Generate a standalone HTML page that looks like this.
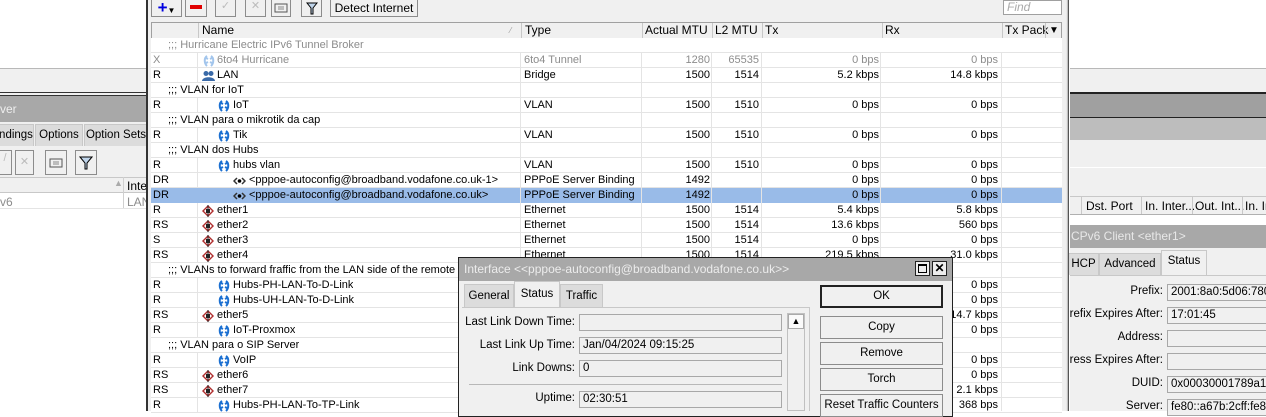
<!DOCTYPE html>
<html><head><meta charset="utf-8"><style>
*{box-sizing:border-box;margin:0;padding:0}
body{width:1266px;height:411px;overflow:hidden;position:relative;background:#fff;font:11px "Liberation Sans",sans-serif;color:#000}
.a{position:absolute;white-space:nowrap}
.btn{position:absolute;border:1px solid #8c8c8c;background:#f0f0f0;text-align:center;line-height:15px;white-space:nowrap}
.r{position:absolute;left:151px;width:911px;height:15px;border-bottom:1px solid #e4e4e4;background:#fff}
.r span{position:absolute;top:0;line-height:15px;white-space:nowrap;overflow:hidden}
.f{left:2px}
.ty{left:373px;width:118px}
.m{left:492px;width:67px;text-align:right}
.l{left:561px;width:47px;text-align:right}
.tx{left:612px;width:116px;text-align:right}
.rx{left:731px;width:116px;text-align:right}
.vl{position:absolute;top:0;height:15px;width:1px;background:#e4e4e4}
.g{color:#8c8c8c}
.sel{background:#99bbe8}
.tab{position:absolute;border:1px solid #c8c8c8;border-bottom:none;background:#dcdcdc;text-align:center;line-height:20px;font-size:11.5px;white-space:nowrap;overflow:hidden}
.lbl{position:absolute;text-align:right;font-size:11.5px;white-space:nowrap;overflow:hidden}
.inp{position:absolute;border:1px solid #a8a8a8;background:#f0f0f0;height:17px;line-height:15px;padding-left:3px;font-size:11.5px;white-space:nowrap;overflow:hidden}
.db{position:absolute;left:820px;width:123px;height:23px;border:1px solid #8c8c8c;background:#f0f0f0;text-align:center;line-height:21px;font-size:11.5px;white-space:nowrap}
</style></head><body>

<!-- left panel -->
<div class="a" style="left:0;top:68px;width:147px;height:25px;background:#f0f0f0;border-top:1px solid #b8b8b8"></div>
<div class="a" style="left:0;top:92px;width:147px;height:4px;border-top:1px solid #333;border-bottom:1px solid #333;background:#f0f0f0"></div>
<div class="a" style="left:0;top:96px;width:147px;height:26px;background:#a8a8a8;color:#eee;font-size:12px;line-height:26px">ver</div>
<div class="a" style="left:0;top:122px;width:147px;height:56px;background:#f0f0f0"></div>
<div class="tab" style="left:-2px;top:124px;width:36px;height:22px">ndings</div>
<div class="tab" style="left:35px;top:124px;width:48px;height:22px">Options</div>
<div class="tab" style="left:84px;top:124px;width:64px;height:22px">Option Sets</div>
<div class="btn" style="left:-2px;top:150px;width:14px;height:25px;color:#bbb">/</div>
<div class="btn" style="left:15px;top:150px;width:19px;height:25px;color:#bbb;line-height:22px">✕</div>
<div class="btn" style="left:45px;top:150px;width:22px;height:25px"><svg width="14" height="12" style="margin-top:6px"><rect x="1" y="2" width="12" height="8" fill="none" stroke="#555"/><path d="M4 5h6M4 7h6" stroke="#888"/></svg></div>
<div class="btn" style="left:75px;top:150px;width:22px;height:25px"><svg width="14" height="14" style="margin-top:5px"><path d="M1 1h12L8 7v6H6V7z" fill="#bfd4ea" stroke="#000"/></svg></div>
<div class="a" style="left:0;top:177px;width:147px;height:16px;background:#f0f0f0;border-top:1px solid #c8c8c8;border-bottom:1px solid #c8c8c8"></div>
<div class="a" style="left:123px;top:177px;width:1px;height:31px;background:#d0d0d0"></div>
<div class="a" style="left:114px;top:178px;color:#aaa;font-size:9px">▲</div>
<div class="a" style="left:127px;top:179px;font-size:12px">Inter</div>
<div class="a" style="left:0;top:195px;color:#8c8c8c;font-size:12px">v6</div>
<div class="a" style="left:127px;top:195px;color:#8c8c8c;font-size:12px">LAN</div>
<div class="a" style="left:0;top:208px;width:147px;height:1px;background:#e4e4e4"></div>

<!-- right panel -->
<div class="a" style="left:1070px;top:68px;width:196px;height:24px;background:#f0f0f0;border-top:1px solid #b8b8b8"></div>
<div class="a" style="left:1070px;top:92px;width:196px;height:2px;background:#222"></div>
<div class="a" style="left:1070px;top:94px;width:196px;height:23px;background:#a0a0a0"></div>
<div class="a" style="left:1070px;top:117px;width:196px;height:1px;background:#222"></div>
<div class="a" style="left:1070px;top:118px;width:196px;height:22px;background:#bdbdbd"></div>
<div class="a" style="left:1070px;top:140px;width:196px;height:57px;background:#f0f0f0;border-bottom:1px solid #c8c8c8"></div>
<div class="a" style="left:1070px;top:167px;width:196px;height:1px;background:#fff"></div>
<div class="a" style="left:1070px;top:197px;width:196px;height:18px;background:#f0f0f0;border-bottom:1px solid #b0b0b0;font-size:12px;line-height:18px;overflow:hidden">
<span class="a" style="left:11px;top:0;width:1px;height:18px;background:#c8c8c8"></span>
<span class="a" style="left:16px">Dst. Port</span>
<span class="a" style="left:71px;top:0;width:1px;height:18px;background:#c8c8c8"></span>
<span class="a" style="left:75px">In. Inter...</span>
<span class="a" style="left:122px;top:0;width:1px;height:18px;background:#c8c8c8"></span>
<span class="a" style="left:125px">Out. Int...</span>
<span class="a" style="left:172px;top:0;width:1px;height:18px;background:#c8c8c8"></span>
<span class="a" style="left:175px">In. In</span></div>
<div class="a" style="left:1070px;top:225px;width:196px;height:23px;background:#a8a8a8;color:#e8e8e8;font-size:12px;line-height:23px;padding-left:1px">CPv6 Client &lt;ether1&gt;</div>
<div class="a" style="left:1070px;top:248px;width:196px;height:163px;background:#f0f0f0"></div>
<div class="tab" style="left:1068px;top:253px;width:31px;height:22px">HCP</div>
<div class="tab" style="left:1099px;top:253px;width:62px;height:22px">Advanced</div>
<div class="tab" style="left:1161px;top:250px;width:46px;height:26px;background:#f0f0f0">Status</div>
<div class="a" style="left:1070px;top:275px;width:196px;height:1px;background:#c8c8c8"></div>
<div class="lbl" style="left:1060px;width:103px;top:285px">Prefix:</div>
<div class="inp" style="left:1167px;top:284px;width:110px">2001:8a0:5d06:7800</div>
<div class="lbl" style="left:1060px;width:103px;top:308px">Prefix Expires After:</div>
<div class="inp" style="left:1167px;top:307px;width:110px">17:01:45</div>
<div class="lbl" style="left:1060px;width:103px;top:331px">Address:</div>
<div class="inp" style="left:1167px;top:330px;width:110px"></div>
<div class="lbl" style="left:1070px;width:93px;top:354px"><span style="position:absolute;right:0">Address Expires After:</span>&nbsp;</div>
<div class="inp" style="left:1167px;top:353px;width:110px"></div>
<div class="lbl" style="left:1060px;width:103px;top:377px">DUID:</div>
<div class="inp" style="left:1167px;top:376px;width:110px">0x00030001789a18</div>
<div class="lbl" style="left:1060px;width:103px;top:400px">Server:</div>
<div class="inp" style="left:1167px;top:399px;width:110px">fe80::a67b:2cff:fe8d</div>

<!-- main window -->
<div class="a" style="left:146px;top:0;width:2px;height:411px;background:#333"></div>
<div class="a" style="left:148px;top:0;width:920px;height:411px;background:#f0f0f0"></div>
<div class="a" style="left:1066px;top:0;width:3px;height:411px;background:#c0c0c0;border-left:1px solid #e8e8e8;border-right:1px solid #555"></div>
<div class="btn" style="left:151px;top:-2px;width:31px;height:19px;line-height:17px"><b style="color:#0000e0;font-size:17px">+</b><span style="font-size:8px">▼</span></div>
<div class="btn" style="left:185px;top:-2px;width:22px;height:19px"><svg width="12" height="6" style="margin-top:6px"><rect width="12" height="4" fill="#e00000"/></svg></div>
<div class="btn" style="left:215px;top:-2px;width:21px;height:19px;color:#bbb">✓</div>
<div class="btn" style="left:245px;top:-2px;width:21px;height:19px;color:#bbb">✕</div>
<div class="btn" style="left:271px;top:-2px;width:20px;height:19px"><svg width="14" height="11" style="margin-top:4px"><rect x="1" y="1" width="12" height="8" fill="none" stroke="#555"/><path d="M4 4h6M4 6h6" stroke="#888"/></svg></div>
<div class="btn" style="left:301px;top:-2px;width:21px;height:19px"><svg width="12" height="13" style="margin-top:3px"><path d="M1 1h10L7 6v6H5V6z" fill="#bfd4ea" stroke="#000"/></svg></div>
<div class="btn" style="left:330px;top:-2px;width:88px;height:19px;font-size:12px;line-height:19px">Detect Internet</div>
<div class="a" style="left:1003px;top:0;width:59px;height:15px;background:#fff;border:1px solid #a0a0a0;color:#aaa;font-style:italic;font-size:12px;line-height:13px;padding-left:3px">Find</div>

<!-- header -->
<div class="a" style="left:151px;top:22px;width:911px;height:17px;background:#f0f0f0;border:1px solid #a0a0a0;font-size:12px;line-height:15px">
<span class="a" style="left:46px;top:0;width:1px;height:15px;background:#c8c8c8"></span>
<span class="a" style="left:50px">Name</span><span class="a" style="left:358px;color:#999;font-size:8px">⁄</span>
<span class="a" style="left:369px;top:0;width:1px;height:15px;background:#c8c8c8"></span>
<span class="a" style="left:373px">Type</span>
<span class="a" style="left:490px;top:0;width:1px;height:15px;background:#c8c8c8"></span>
<span class="a" style="left:493px">Actual MTU</span>
<span class="a" style="left:560px;top:0;width:1px;height:15px;background:#c8c8c8"></span>
<span class="a" style="left:563px">L2 MTU</span>
<span class="a" style="left:610px;top:0;width:1px;height:15px;background:#c8c8c8"></span>
<span class="a" style="left:613px">Tx</span>
<span class="a" style="left:730px;top:0;width:1px;height:15px;background:#c8c8c8"></span>
<span class="a" style="left:733px">Rx</span>
<span class="a" style="left:850px;top:0;width:1px;height:15px;background:#c8c8c8"></span>
<span class="a" style="left:853px">Tx Packe</span>
<span class="a" style="left:893px;top:0;width:1px;height:15px;background:#c8c8c8"></span>
<span class="a" style="left:897px;font-size:10px;background:#f0f0f0">▼</span></div>

<svg width="0" height="0" style="position:absolute"><defs>
<g id="vl"><path d="M4 1C1 3 1 8 4 11M3 3l2 1M3 8l2-1" fill="none" stroke="#1a6fd1" stroke-width="2"/><path d="M8 1C11 3 11 8 8 11M9 3l-2 1M9 8l-2-1" fill="none" stroke="#1a6fd1" stroke-width="2"/></g>
<g id="et"><path d="M6 0L12 6L6 12L0 6Z" fill="#b03030"/><path d="M6 2L10 6L6 10L2 6Z" fill="#fff"/><rect x="4" y="4" width="4" height="4" fill="#222"/><path d="M6 0v12" stroke="#222"/></g>
<g id="pp"><path d="M4 3L1 6L4 9M9 3L12 6L9 9" fill="none" stroke="#333" stroke-width="1.5"/><circle cx="6.5" cy="6" r="1.8" fill="#000"/></g>
</defs></svg>

<div class="r" style="top:38px"><span class="g" style="left:17px">;;; Hurricane Electric IPv6 Tunnel Broker</span></div>
<div class="r" style="top:53px"><i class="vl" style="left:46px"></i><span class="f g">X</span><svg class="a" style="left:52px;top:2px" width="12" height="12" opacity=".4"><use href="#vl"/></svg><span class="g" style="left:66px">6to4 Hurricane</span><span class="ty g">6to4 Tunnel</span><span class="m g">1280</span><span class="l g">65535</span><span class="tx g">0 bps</span><span class="rx g">0 bps</span></div>
<div class="r" style="top:68px"><i class="vl" style="left:46px"></i><span class="f">R</span><svg class="a" style="left:51px;top:2px" width="13" height="12"><circle cx="4" cy="3.5" r="2.5" fill="#3a6aa8"/><circle cx="9" cy="3.5" r="2.5" fill="#3a6aa8"/><path d="M0 11c0-5 13-5 13 0z" fill="#3a6aa8"/></svg><span style="left:66px">LAN</span><span class="ty">Bridge</span><span class="m">1500</span><span class="l">1514</span><span class="tx">5.2 kbps</span><span class="rx">14.8 kbps</span></div>
<div class="r" style="top:83px"><span style="left:17px">;;; VLAN for IoT</span></div>
<div class="r" style="top:98px"><i class="vl" style="left:46px"></i><span class="f">R</span><svg class="a" style="left:67px;top:2px" width="12" height="12"><use href="#vl"/></svg><span style="left:82px">IoT</span><span class="ty">VLAN</span><span class="m">1500</span><span class="l">1510</span><span class="tx">0 bps</span><span class="rx">0 bps</span></div>
<div class="r" style="top:113px"><span style="left:17px">;;; VLAN para o mikrotik da cap</span></div>
<div class="r" style="top:128px"><i class="vl" style="left:46px"></i><span class="f">R</span><svg class="a" style="left:67px;top:2px" width="12" height="12"><use href="#vl"/></svg><span style="left:82px">Tik</span><span class="ty">VLAN</span><span class="m">1500</span><span class="l">1510</span><span class="tx">0 bps</span><span class="rx">0 bps</span></div>
<div class="r" style="top:143px"><span style="left:17px">;;; VLAN dos Hubs</span></div>
<div class="r" style="top:158px"><i class="vl" style="left:46px"></i><span class="f">R</span><svg class="a" style="left:67px;top:2px" width="12" height="12"><use href="#vl"/></svg><span style="left:82px">hubs vlan</span><span class="ty">VLAN</span><span class="m">1500</span><span class="l">1510</span><span class="tx">0 bps</span><span class="rx">0 bps</span></div>
<div class="r" style="top:173px"><i class="vl" style="left:46px"></i><span class="f">DR</span><svg class="a" style="left:82px;top:2px" width="13" height="12"><use href="#pp"/></svg><span style="left:98px">&lt;pppoe-autoconfig@broadband.vodafone.co.uk-1&gt;</span><span class="ty">PPPoE Server Binding</span><span class="m">1492</span><span class="tx">0 bps</span><span class="rx">0 bps</span></div>
<div class="r sel" style="top:188px;border-bottom-color:#99bbe8"><span class="f">DR</span><svg class="a" style="left:82px;top:2px" width="13" height="12"><use href="#pp"/></svg><span style="left:98px">&lt;pppoe-autoconfig@broadband.vodafone.co.uk&gt;</span><span class="ty">PPPoE Server Binding</span><span class="m">1492</span><span class="tx">0 bps</span><span class="rx">0 bps</span></div>
<div class="r" style="top:203px"><i class="vl" style="left:46px"></i><span class="f">R</span><svg class="a" style="left:51px;top:2px" width="12" height="12"><use href="#et"/></svg><span style="left:66px">ether1</span><span class="ty">Ethernet</span><span class="m">1500</span><span class="l">1514</span><span class="tx">5.4 kbps</span><span class="rx">5.8 kbps</span></div>
<div class="r" style="top:218px"><i class="vl" style="left:46px"></i><span class="f">RS</span><svg class="a" style="left:51px;top:2px" width="12" height="12"><use href="#et"/></svg><span style="left:66px">ether2</span><span class="ty">Ethernet</span><span class="m">1500</span><span class="l">1514</span><span class="tx">13.6 kbps</span><span class="rx">560 bps</span></div>
<div class="r" style="top:233px"><i class="vl" style="left:46px"></i><span class="f">S</span><svg class="a" style="left:51px;top:2px" width="12" height="12"><use href="#et"/></svg><span style="left:66px">ether3</span><span class="ty">Ethernet</span><span class="m">1500</span><span class="l">1514</span><span class="tx">0 bps</span><span class="rx">0 bps</span></div>
<div class="r" style="top:248px"><i class="vl" style="left:46px"></i><span class="f">RS</span><svg class="a" style="left:51px;top:2px" width="12" height="12"><use href="#et"/></svg><span style="left:66px">ether4</span><span class="ty">Ethernet</span><span class="m">1500</span><span class="l">1514</span><span class="tx">219.5 kbps</span><span class="rx">31.0 kbps</span></div>
<div class="r" style="top:263px"><span style="left:17px">;;; VLANs to forward fraffic from the LAN side of the remote Hubs</span></div>
<div class="r" style="top:278px"><i class="vl" style="left:46px"></i><span class="f">R</span><svg class="a" style="left:67px;top:2px" width="12" height="12"><use href="#vl"/></svg><span style="left:82px">Hubs-PH-LAN-To-D-Link</span><span class="rx">0 bps</span></div>
<div class="r" style="top:293px"><i class="vl" style="left:46px"></i><span class="f">R</span><svg class="a" style="left:67px;top:2px" width="12" height="12"><use href="#vl"/></svg><span style="left:82px">Hubs-UH-LAN-To-D-Link</span><span class="rx">0 bps</span></div>
<div class="r" style="top:308px"><i class="vl" style="left:46px"></i><span class="f">RS</span><svg class="a" style="left:51px;top:2px" width="12" height="12"><use href="#et"/></svg><span style="left:66px">ether5</span><span class="rx">14.7 kbps</span></div>
<div class="r" style="top:323px"><i class="vl" style="left:46px"></i><span class="f">R</span><svg class="a" style="left:67px;top:2px" width="12" height="12"><use href="#vl"/></svg><span style="left:82px">IoT-Proxmox</span><span class="rx">0 bps</span></div>
<div class="r" style="top:338px"><span style="left:17px">;;; VLAN para o SIP Server</span></div>
<div class="r" style="top:353px"><i class="vl" style="left:46px"></i><span class="f">R</span><svg class="a" style="left:67px;top:2px" width="12" height="12"><use href="#vl"/></svg><span style="left:82px">VoIP</span><span class="rx">0 bps</span></div>
<div class="r" style="top:368px"><i class="vl" style="left:46px"></i><span class="f">RS</span><svg class="a" style="left:51px;top:2px" width="12" height="12"><use href="#et"/></svg><span style="left:66px">ether6</span><span class="rx">0 bps</span></div>
<div class="r" style="top:383px"><i class="vl" style="left:46px"></i><span class="f">RS</span><svg class="a" style="left:51px;top:2px" width="12" height="12"><use href="#et"/></svg><span style="left:66px">ether7</span><span class="rx">2.1 kbps</span></div>
<div class="r" style="top:398px"><i class="vl" style="left:46px"></i><span class="f">R</span><svg class="a" style="left:67px;top:2px" width="12" height="12"><use href="#vl"/></svg><span style="left:82px">Hubs-PH-LAN-To-TP-Link</span><span class="rx">368 bps</span></div>
<!-- column lines -->
<div class="a" style="left:520px;top:53px;width:1px;height:358px;background:#e4e4e4"></div>
<div class="a" style="left:641px;top:53px;width:1px;height:358px;background:#e4e4e4"></div>
<div class="a" style="left:711px;top:53px;width:1px;height:358px;background:#e4e4e4"></div>
<div class="a" style="left:761px;top:53px;width:1px;height:358px;background:#e4e4e4"></div>
<div class="a" style="left:880px;top:53px;width:1px;height:358px;background:#e4e4e4"></div>
<div class="a" style="left:1001px;top:53px;width:1px;height:358px;background:#e4e4e4"></div>

<!-- dialog -->
<div class="a" style="left:458px;top:257px;width:495px;height:160px;background:#f0f0f0;border:1px solid #222"></div>
<div class="a" style="left:459px;top:258px;width:493px;height:23px;background:#a8a8a8;color:#ececec;font-size:12px;line-height:23px;padding-left:5px">Interface &lt;&lt;pppoe-autoconfig@broadband.vodafone.co.uk&gt;&gt;</div>
<div class="a" style="left:915px;top:261px;width:15px;height:15px;border:1px solid #222;background:#eee"><div class="a" style="left:2px;top:2px;width:9px;height:9px;border:1px solid #000;border-top-width:2px"></div></div>
<div class="a" style="left:932px;top:261px;width:15px;height:15px;border:1px solid #222;background:#eee;font-size:12px;line-height:13px;text-align:center;font-weight:bold">✕</div>
<div class="tab" style="left:464px;top:284px;width:50px;height:23px;line-height:23px">General</div>
<div class="tab" style="left:514px;top:281px;width:46px;height:27px;background:#f0f0f0;line-height:24px">Status</div>
<div class="tab" style="left:560px;top:284px;width:43px;height:23px;line-height:23px">Traffic</div>
<div class="a" style="left:462px;top:307px;width:348px;height:1px;background:#c8c8c8"></div>
<div class="a" style="left:809px;top:307px;width:1px;height:104px;background:#c8c8c8"></div>
<div class="lbl" style="left:460px;width:115px;top:316px">Last Link Down Time:</div>
<div class="inp" style="left:579px;top:314px;width:203px"></div>
<div class="lbl" style="left:460px;width:115px;top:339px">Last Link Up Time:</div>
<div class="inp" style="left:579px;top:337px;width:203px">Jan/04/2024 09:15:25</div>
<div class="lbl" style="left:460px;width:115px;top:362px">Link Downs:</div>
<div class="inp" style="left:579px;top:360px;width:203px">0</div>
<div class="a" style="left:469px;top:384px;width:313px;height:1px;background:#b8b8b8"></div>
<div class="lbl" style="left:460px;width:115px;top:392px">Uptime:</div>
<div class="inp" style="left:579px;top:391px;width:203px">02:30:51</div>
<div class="a" style="left:787px;top:313px;width:18px;height:98px;border:1px solid #c0c0c0;background:#f0f0f0"></div>
<div class="a" style="left:788px;top:314px;width:16px;height:15px;border:1px solid #aaa;background:#fafafa;font-size:9px;text-align:center;line-height:13px">▲</div>
<div class="db" style="top:285px;border:2px solid #222;line-height:19px">OK</div>
<div class="db" style="top:316px">Copy</div>
<div class="db" style="top:342px">Remove</div>
<div class="db" style="top:368px">Torch</div>
<div class="db" style="top:394px">Reset Traffic Counters</div>
</body></html>
